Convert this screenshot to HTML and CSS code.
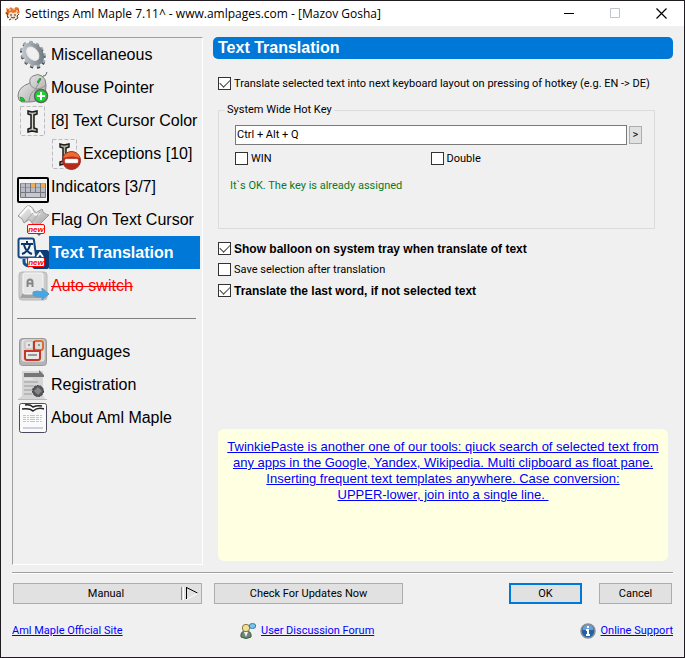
FILE: index.html
```html
<!DOCTYPE html>
<html lang="en">
<head>
    <meta charset="UTF-8">
    <meta name="viewport" content="width=device-width, initial-scale=1.0">
    <title>Settings Aml Maple 7.11</title>
    <link rel="stylesheet" href="styles.css">
</head>
<body>
<div class="window">
    <header class="titlebar">
        <svg class="app-icon" width="16" height="16" viewBox="0 0 16 16">
            <path d="M1 2l3 1 2-2 2 2 3-2 3 1-1 3 2 2-3 1-3 1-3-1-4 1-2-2 2-2z" fill="#e8722a"/>
            <path d="M4 4h2M8 3h2M11 5h2" stroke="#ffc488" stroke-width="1.5"/>
            <path d="M4 7l2-1 2 1 4-1 1 4-2 4H6l-3-3z" fill="#f5e3d2"/>
            <path d="M1 7l2 1-1 2 2 2M14 8l-2 2 1 2-3 2M5 9h2M9 9h2M6 11l2 1 2-1M4 14l2-1" stroke="#4b3a30" fill="none"/>
            <path d="M2 4l1 2M2 12l2-1M13 3l1 3" stroke="#c34b1c"/>
        </svg>
        <h1 class="title">Settings Aml Maple 7.11^ - www.amlpages.com - [Mazov Gosha]</h1>
        <button class="win-btn" aria-label="Minimize"><svg width="11" height="11" viewBox="0 0 11 11"><path d="M0 5.500h10" stroke="#000"/></svg></button>
        <button class="win-btn" aria-label="Maximize" disabled><svg width="11" height="11" viewBox="0 0 11 11"><path d="M.5 .5h9v9h-9z" fill="none" stroke="#c3c3cf"/></svg></button>
        <button class="win-btn" aria-label="Close"><svg width="11" height="11" viewBox="0 0 11 11"><path d="M.5 .5l10 10M10.500 .5l-10 10" stroke="#000" stroke-width="1.200"/></svg></button>
    </header>

    <div class="panes">
        <nav class="sidebar">
            <a class="item" href="#misc">
                <svg class="icon" viewBox="0 0 32 32">
                    <defs>
                        <linearGradient id="silver" x1="0" y1="0" x2="1" y2="1"><stop offset="0" stop-color="#f4f4f4"/><stop offset="1" stop-color="#a2a2a2"/></linearGradient>
                        <linearGradient id="steel" x1="0" y1="0" x2="1" y2="1"><stop offset="0" stop-color="#c9cdd1"/><stop offset="1" stop-color="#6c757d"/></linearGradient>
                    </defs>
                    <g transform="rotate(-40 16 15)">
                        <ellipse cx="15" cy="16" rx="10" ry="13" fill="none" stroke="#3c444c" stroke-width="3" stroke-dasharray="3 3.600"/>
                        <ellipse cx="16" cy="15" rx="10" ry="13" fill="none" stroke="#a3abb2" stroke-width="3" stroke-dasharray="3 3.600"/>
                        <ellipse cx="16" cy="15" rx="7.500" ry="10" fill="none" stroke="url(#steel)" stroke-width="5"/>
                        <ellipse cx="16" cy="14.500" rx="5" ry="7.500" fill="#f0f0f0" stroke="#e3e7ea"/>
                    </g>
                </svg>
                <span>Miscellaneous</span>
            </a>
            <a class="item" href="#mouse">
                <svg class="icon" viewBox="0 0 32 32">
                    <path d="M25 6l1-2q3 1 4-4" fill="none" stroke="#666"/>
                    <path d="M13 11q-1-5 3-7 5-3 9 0 4 3 4 9 0 9-5 13-4 4-13 4H5q-4-1-4-6 0-9 12-13z" fill="url(#silver)" stroke="#808080"/>
                    <path d="M13 11q1 5 7 6 5 0 9-4M20 17q-7 2-8 13M19 16l5-9" fill="none" stroke="#909090"/>
                    <path d="M20 10l3-4 1 1-3 4z" fill="#12dc1e" stroke="#187a20" stroke-width=".6"/>
                    <path d="M3 25q4 0 5 4H4z" fill="#12d61e" stroke="#187a20" stroke-width=".6"/>
                    <circle cx="24" cy="24" r="6.500" fill="#17d829" stroke="#5c6660" stroke-width="1.500"/>
                    <path d="M24 20v8M20 24h8" stroke="#fff" stroke-width="2"/>
                </svg>
                <span>Mouse Pointer</span>
            </a>
            <a class="item" href="#cursor">
                <svg class="icon" viewBox="0 0 32 32">
                    <rect x="3.500" y="1.500" width="24" height="29" fill="#f2f2f2" stroke="#bcbcc0" stroke-dasharray="4 2"/>
                    <path d="M11 6l4 1 5-1v3l-3 1v13l3 1v3l-5-1-4 1v-3l3-1V10l-3-1z" fill="#aab09c" stroke="#1c1c1c" stroke-width="1.500"/>
                    <path d="M15.500 8v17" stroke="#d4d8cb"/>
                </svg>
                <span>[8] Text Cursor Color</span>
            </a>
            <a class="item item-sub" href="#exceptions">
                <svg class="icon" viewBox="0 0 32 32">
                    <rect x="3.500" y="1.500" width="24" height="29" fill="#f2f2f2" stroke="#bcbcc0" stroke-dasharray="4 2"/>
                    <path d="M11 6l4 1 5-1v3l-3 1v13l3 1v3l-5-1-4 1v-3l3-1V10l-3-1z" fill="#aab09c" stroke="#1c1c1c" stroke-width="1.500"/>
                    <circle cx="22.500" cy="22.500" r="9" fill="#b8281b" stroke="#a3291d"/>
                    <path d="M14 20a9 9 0 0 1 17 0q-8-3-17 0z" fill="#ec6a2b"/>
                    <rect x="16" y="21" width="13" height="4" rx="1" fill="#fff" stroke="#d8c6c3" stroke-width=".5"/>
                </svg>
                <span>Exceptions [10]</span>
            </a>
            <a class="item" href="#indicators">
                <svg class="icon" viewBox="0 0 32 32">
                    <rect x="1" y="7" width="30" height="24" rx="1" fill="#f4f4f4" stroke="#000" stroke-width="2"/>
                    <rect x="3" y="12" width="26" height="15" rx="1" fill="#75777f"/>
                    <path d="M4 14.500h24M4 19h24M4 24h4M24 24h4" stroke="#b9bbc5" stroke-width="4" stroke-dasharray="4 1"/>
                    <path d="M14 14.500h4M24 14.500h4" stroke="#f2ae4d" stroke-width="4"/>
                    <path d="M9 24h14" stroke="#c6c7ce" stroke-width="4"/>
                </svg>
                <span>Indicators [3/7]</span>
            </a>
            <a class="item" href="#flag">
                <svg class="icon" viewBox="0 0 32 32">
                    <path d="M1 12L10 2q5-1 7 5 2 3 5 0l3-2q1 5 7 6L21 22q-4 1-6-3-2-5-5-2l-3 2q-1-5-6-7z" fill="url(#silver)" stroke="#999"/>
                    <path d="M3 12l8-9q3 1 5 7M17 10q3 2 6-1" stroke="#fafafa" stroke-width="2" fill="none"/>
                    <path d="M8 18l8-9M15 18l8-10" stroke="#a8a8a8" fill="none"/>
                    <path d="M20 30l2 2 2-2z" fill="#666"/>
                    <rect x="10.500" y="20.500" width="17" height="9" rx="1.500" fill="#fff" stroke="#f00"/>
                    <text class="badge-text" x="19" y="28" text-anchor="middle">new</text>
                </svg>
                <span>Flag On Text Cursor</span>
            </a>
            <a class="item item-active" href="#translation">
                <svg class="icon" viewBox="0 0 32 32">
                    <path d="M14 13h16q2 0 2 2v15q0 2-2 2H17l-5-5z" fill="#0c3c78"/>
                    <path d="M7 22v3q0 3 5 4" fill="none" stroke="#16528f" stroke-width="3"/>
                    <path d="M3 1.500h12q2 0 2 2l2 15q0 2-2 2H3.500q-2 0-2-2v-15q0-2 1.500-2z" fill="#f3f5f8" stroke="#16467e" stroke-width="2"/>
                    <path d="M4 7h12M10 4v3M7 8q2 7 8 9M13 8q-2 7-8 9" fill="none" stroke="#0d3668" stroke-width="2"/>
                    <path d="M20 20l3-4 3 4" fill="none" stroke="#fff" stroke-width="2"/>
                    <rect x="10.500" y="20.500" width="17" height="9" rx="1.500" fill="#fff" stroke="#f00"/>
                    <text class="badge-text" x="19" y="28" text-anchor="middle">new</text>
                </svg>
                <span>Text Translation</span>
            </a>
            <a class="item item-off" href="#autoswitch">
                <svg class="icon" viewBox="0 0 32 32">
                    <rect x="2" y="2" width="28" height="28" rx="3" fill="#cbcbcb" stroke="#b8b8b8"/>
                    <path d="M3 28l3-5h19l4 5z" fill="#a2a2a2"/>
                    <rect x="6" y="3" width="20" height="21" rx="2" fill="#e6e6e6" stroke="#f8f8f8"/>
                    <path d="M10.500 17v-4.500q0-3 2.500-3t2.500 3V17M10 13.500h5" fill="none" stroke="#85858a" stroke-width="2"/>
                    <path d="M16 22q4-2 9 0v-4l7 6-7 6v-3q-5 1-9-2z" fill="#45a8e5" stroke="#6a98bb"/>
                </svg>
                <span>Auto switch</span>
            </a>
            <hr class="nav-line">
            <a class="item" href="#languages">
                <svg class="icon" viewBox="0 0 32 32">
                    <rect x="2.500" y="2.500" width="27" height="27" rx="3" fill="#b4b4b4" stroke="#999"/>
                    <rect x="5" y="4" width="22" height="21" rx="2" fill="#d8d8d8" stroke="#eee"/>
                    <rect x="8" y="5" width="8" height="8" rx="1" fill="#e5e5e5" stroke="#b9b9b9"/>
                    <rect x="17" y="5" width="9" height="9" rx="2" fill="#ddd" stroke="#d87028" stroke-width="2"/>
                    <path d="M8 15h15v7q0 2-2 2H10q-2 0-2-2z" fill="#e9e9e9" stroke="#c93524" stroke-width="2"/>
                    <path d="M17 5v10" stroke="#c93524" stroke-width="2"/>
                    <path d="M11 9h2M21 9h2M11 19h9" stroke="#999" stroke-width="2"/>
                </svg>
                <span>Languages</span>
            </a>
            <a class="item" href="#registration">
                <svg class="icon" viewBox="0 0 32 32">
                    <path d="M5 2h21v24l2 4H1l4-3z" fill="#d6d6d6"/>
                    <path d="M1 30.500h29" stroke="#bababa"/>
                    <path d="M7 4h15V1l5 5v2H7z" fill="#777"/>
                    <path d="M7 13h14M7 17h10M7 21h8M7 25h8" stroke="#9b9b9b"/>
                    <path d="M7 10h9" stroke="#f2f2f2"/>
                    <circle cx="21" cy="22" r="5.500" fill="#57575a" stroke="#333" stroke-dasharray="2 1"/>
                    <path d="M21 18l4 4-4 4-4-4z" fill="#85858a"/>
                </svg>
                <span>Registration</span>
            </a>
            <a class="item" href="#about">
                <svg class="icon" viewBox="0 0 32 32">
                    <rect x="2.500" y="1.500" width="27" height="29" rx="2" fill="#fafafa" stroke="#4a4a5c"/>
                    <path d="M8 3q5-1 8 2 4-2 9-1M5 7q8-1 11 2 5-4 11-2" fill="none" stroke="#222" stroke-width="1.500"/>
                    <path d="M6 13.500h19M6 15.500h20M6 17.500h18M6 19.500h20" stroke="#a5cfdc" stroke-dasharray="3 1 2 1 5 1"/>
                    <path d="M6 26h20" stroke="#cfcfe4" stroke-width="2"/>
                </svg>
                <span>About Aml Maple</span>
            </a>
        </nav>

        <main class="main">
            <h2 class="page-title">Text Translation</h2>
            <form class="options">
                <label class="check"><input type="checkbox" checked>Translate selected text into next keyboard layout on pressing of hotkey (e.g. EN -&gt; DE)</label>
                <fieldset class="hotkey">
                    <legend>System Wide Hot Key</legend>
                    <div class="key-row">
                        <input class="key-input" type="text" value="Ctrl + Alt + Q" aria-label="System Wide Hot Key">
                        <button class="key-btn" type="button">&gt;</button>
                    </div>
                    <div class="mods">
                        <label class="check"><input type="checkbox">WIN</label>
                        <label class="check"><input type="checkbox">Double</label>
                    </div>
                    <p class="status">It`s OK. The key is already assigned</p>
                </fieldset>
                <label class="check strong"><input type="checkbox" checked>Show balloon on system tray when translate of text</label>
                <label class="check"><input type="checkbox">Save selection after translation</label>
                <label class="check strong"><input type="checkbox" checked>Translate the last word, if not selected text</label>
            </form>
            <aside class="promo">
                <a href="#twinkie">TwinkiePaste is another one of our tools: qiuck search of selected text from any apps in the Google, Yandex, Wikipedia. Multi clipboard as float pane. Inserting frequent text templates anywhere. Case conversion:<br>UPPER-lower, join into a single line.&nbsp;</a>
            </aside>
        </main>
    </div>

    <footer class="footer">
        <div class="buttons">
            <button class="btn btn-wide btn-split">
                <span>Manual</span>
                <svg width="18" height="15" viewBox="0 0 18 15">
                    <path d="M1.500 1v13" stroke="#888"/><path d="M3.500 1v13" stroke="#fff"/>
                    <path d="M6.500 1v12" stroke="#000"/><path d="M6.500 1.500l11 5.500" stroke="#000" fill="none"/><path d="M17.500 7.500l-11 6" stroke="#fff"/>
                </svg>
            </button>
            <button class="btn btn-wide">Check For Updates Now</button>
            <button class="btn btn-ok">OK</button>
            <button class="btn">Cancel</button>
        </div>
        <div class="links">
            <div class="site"><a href="#site">Aml Maple Official Site</a></div>
            <a class="with-icon" href="#forum">
                <svg width="16" height="16" viewBox="0 0 16 16">
                    <path d="M1 14q-1-6 5-6t5 6q-5 3-10 0z" fill="#6d8870" stroke="#40584a"/>
                    <path d="M4 9l2 5 2-5z" fill="#f5f5f5"/>
                    <circle cx="6" cy="5" r="3.700" fill="#f0df9b" stroke="#8d7535"/>
                    <ellipse cx="12.500" cy="3" rx="3.300" ry="2.500" fill="#79c4ef" stroke="#317fae"/>
                </svg>
                <span>User Discussion Forum</span>
            </a>
            <a class="with-icon support" href="#support">
                <svg width="16" height="16" viewBox="0 0 16 16">
                    <circle cx="8" cy="8" r="7" fill="#1f62a8" stroke="#8b8d90" stroke-width="1.500"/>
                    <path d="M2.500 7a5.500 5.500 0 0 1 11 0z" fill="#6b9fd2"/>
                    <path d="M8 3v2M6 7h2v5M6 12h4" stroke="#fff" stroke-width="2" fill="none"/>
                </svg>
                <span>Online Support</span>
            </a>
        </div>
    </footer>
</div>
</body>
</html>
```

FILE: styles.css
```css
* {
    box-sizing: border-box;
}
body {
    margin: 0;
    font-family: Roboto, "Liberation Sans", sans-serif;
    font-size: 11px;
    line-height: 16px;
    color: #000;
    background-color: #f0f0f0;
}
button, input {
    font: inherit;
    color: inherit;
}
.window {
    display: flex;
    flex-direction: column;
    min-height: 100vh;
    border: 1px solid #1f1b20;
}

/* title bar */
.titlebar {
    display: flex;
    align-items: center;
    height: 25px;
    padding-left: 4px;
    background-color: #fff;
}
.title {
    flex: 1;
    margin: 0 0 0 4px;
    font: 12px/16px "Open Sans", "Noto Sans", sans-serif;
    white-space: nowrap;
}
.win-btn {
    display: flex;
    align-items: center;
    justify-content: center;
    width: 46px;
    height: 25px;
    padding: 0;
    border: none;
    background: none;
}

/* sidebar */
.panes {
    display: flex;
    flex: 1;
    gap: 10px;
    padding: 11px 11px 0;
}
.sidebar {
    width: 191px;
    padding-right: 2px;
    border: 1px solid #fff;
    border-top-color: #a0a0a0;
    border-left-color: #a0a0a0;
}
.item {
    display: flex;
    align-items: center;
    height: 33px;
    padding-left: 4px;
    font-family: "Liberation Sans", Arial, sans-serif;
    font-size: 16px;
    line-height: 33px;
    color: #000;
    text-decoration: none;
    white-space: nowrap;
}
.item span {
    flex: 1;
    padding-left: 2px;
}
.item-sub {
    padding-left: 36px;
}
.item-active span {
    padding-left: 3px;
    font-weight: bold;
    color: #fff;
    background-color: #0078d7;
}
.item-off {
    color: #f00;
    text-decoration: line-through;
}
.icon {
    flex: none;
    width: 32px;
    height: 32px;
}
.badge-text {
    font-size: 8px;
    font-weight: bold;
    font-style: italic;
    fill: #f00;
}
.nav-line {
    height: 1px;
    margin: 16px 4px;
    border: none;
    background-color: #808080;
}

/* page */
.main {
    display: flex;
    flex: 1;
    flex-direction: column;
    min-width: 0;
}
.page-title {
    margin: 0;
    padding-left: 5px;
    font-family: "Liberation Sans", Arial, sans-serif;
    font-size: 16px;
    line-height: 22px;
    color: #fff;
    background-color: #0078d7;
    border-radius: 5px;
}
.options {
    padding: 14px 18px 0 5px;
}
.check {
    display: flex;
    align-items: center;
    gap: 3px;
    height: 21px;
    white-space: nowrap;
}
.check input {
    display: grid;
    flex: none;
    place-content: center;
    width: 13px;
    height: 13px;
    margin: 0;
    appearance: none;
    background-color: #fff;
    border: 1px solid #333;
}
.check input:checked::before {
    content: "";
    width: 9px;
    height: 5px;
    margin-bottom: 3px;
    border: solid #444;
    border-width: 0 0 1px 1px;
    transform: rotate(-45deg);
}
.strong {
    font-family: "Liberation Sans", Arial, sans-serif;
    font-size: 12px;
    font-weight: bold;
}
.hotkey {
    min-height: 127px;
    margin: 8px 0 9px;
    padding: 7px 12px 0 16px;
    border: 1px solid #dcdcdc;
}
.hotkey legend {
    margin-left: -10px;
    padding: 0 2px;
}
.key-row {
    display: flex;
    align-items: center;
    gap: 2px;
}
.key-input {
    flex: 1;
    min-width: 0;
    height: 20px;
    padding: 0 1px 2px;
    background-color: #fff;
    border: 1px solid #7a7a7a;
}
.key-btn {
    width: 13px;
    height: 18px;
    padding: 0;
    line-height: 14px;
    background-color: #e1e1e1;
    border: 1px solid #adadad;
}
.mods {
    display: grid;
    grid-template-columns: 1fr 1fr;
    margin-top: 3px;
    padding-right: 16px;
}
.status {
    margin: 9px 0 0 -5px;
    color: #087a22;
}
.promo {
    min-height: 132px;
    margin: auto 5px 4px;
    padding: 10px 5px;
    font-family: "Liberation Sans", Arial, sans-serif;
    font-size: 13px;
    text-align: center;
    background-color: #ffffe1;
    border-radius: 6px;
}

/* footer */
a {
    color: #00f;
}
.footer {
    margin: 7px 11px 0;
    border-top: 1px solid #a0a0a0;
    box-shadow: inset 0 1px #fff;
}
.buttons {
    display: flex;
    gap: 12px;
    padding: 10px 1px 0;
}
.btn {
    width: 73px;
    height: 21px;
    padding: 0;
    background-color: #e1e1e1;
    border: 1px solid #adadad;
}
.btn-wide {
    width: 189px;
}
.btn-split {
    display: flex;
    align-items: center;
    padding-right: 3px;
}
.btn-split span {
    flex: 1;
    padding-left: 18px;
}
.btn-ok {
    margin-left: auto;
    margin-right: 5px;
    border: 2px solid #0078d7;
}
.links {
    display: flex;
    align-items: center;
    padding: 19px 0 18px;
}
.site {
    width: 228px;
}
.support {
    margin-left: auto;
}
.with-icon {
    display: flex;
    align-items: center;
    gap: 5px;
    text-decoration: none;
}
.with-icon span {
    text-decoration: underline;
}
```
